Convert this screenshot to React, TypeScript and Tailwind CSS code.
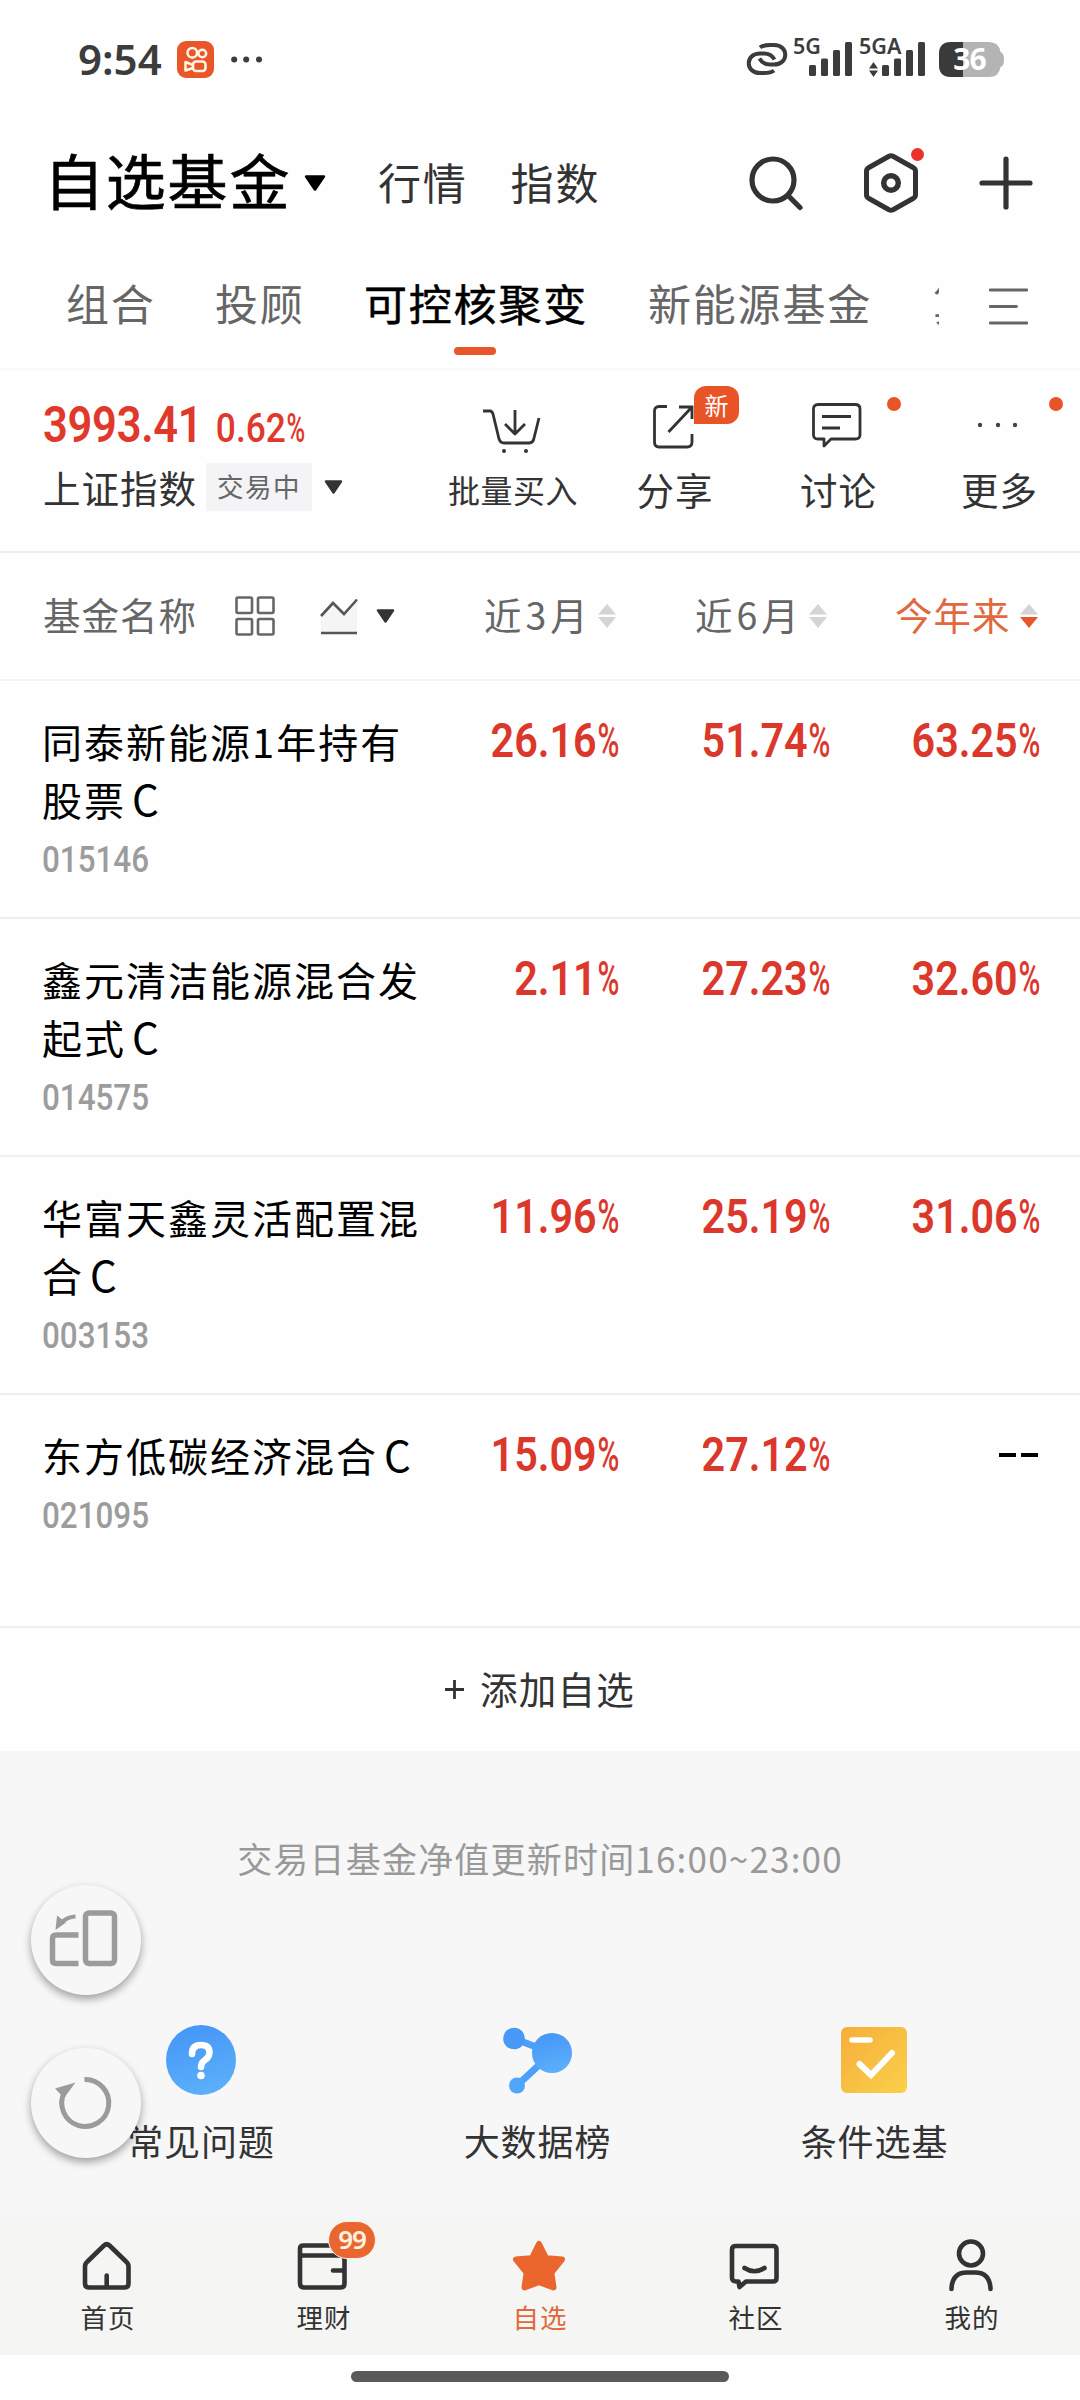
import React from "react";

const Caret = ({ w, h, c }: { w: number; h: number; c: string }) => (
  <svg width={w} height={h} viewBox="0 0 20 15" preserveAspectRatio="none" className="shrink-0">
    <path d="M2 1.5H18L10 13.5Z" fill={c} stroke={c} strokeWidth="2.5" strokeLinejoin="round" />
  </svg>
);

const Sort = ({ down }: { down?: boolean }) => (
  <svg width="18" height="24" viewBox="0 0 18 24" className="shrink-0">
    <path d="M9 0L18 10.5H0Z" fill="#d4d4d4" />
    <path d="M0 13H18L9 24Z" fill={down ? "#e8562a" : "#d4d4d4"} />
  </svg>
);

const Bars = () => (
  <svg width="43" height="34" viewBox="0 0 43 34">
    <g fill="#3c3c3c">
      <rect x="0" y="23" width="7" height="11" rx="1.5" />
      <rect x="12" y="16.5" width="7" height="17.5" rx="1.5" />
      <rect x="24" y="8" width="7" height="26" rx="1.5" />
      <rect x="36" y="0" width="7" height="34" rx="1.5" />
    </g>
  </svg>
);

// Light, condensed percent sign that follows the bold figures.
const Percent = () => (
  <span className="ml-[1px] inline-block w-[0.52em] origin-left scale-x-[0.72] text-left font-medium">%</span>
);

function StatusBar() {
  return (
    <header className="flex h-[120px] items-start pl-[78px] pr-[76px] pt-[38px] text-[#3c3c3c]">
      <span className="-mt-[1px] h-[44px] w-[99px] font-['Noto_Sans'] text-[42px] leading-[44px] font-semibold">9:54</span>
      <svg className="mt-[3px]" width="37" height="37" viewBox="0 0 37 37">
        <rect width="37" height="37" rx="9" fill="#e8562a" />
        <g fill="none" stroke="#fff3e2" strokeWidth="2.6">
          <circle cx="15.3" cy="11.8" r="4.8" />
          <circle cx="25.3" cy="12.5" r="3.8" />
          <rect x="16" y="20.5" width="12.5" height="9.500" rx="3" />
          <path d="M16 24L8.500 21V29.5L16 27" strokeLinejoin="round" />
        </g>
      </svg>
      <svg className="ml-[17px] mt-[18px]" width="32" height="7" viewBox="0 0 32 7">
        <g fill="#3c3c3c">
          <circle cx="3.2" cy="3.5" r="3" />
          <circle cx="15.2" cy="3.5" r="3" />
          <circle cx="28" cy="3.5" r="3" />
        </g>
      </svg>
      <div className="ml-auto flex items-start">
        <svg className="mt-[4px]" width="42" height="34" viewBox="0 0 42 34">
          <g fill="none" stroke="#3c3c3c" strokeWidth="4" strokeLinecap="butt">
            <path d="M14 5.5C17 3 20 3 24 3H28C43 3 43 22.500 28 22.500H24C19 22.500 16 21 13.500 16.500" />
            <path d="M28 28.500C25 31 22 31 18 31H14C-1 31 -1 11.500 14 11.500H18C23 11.500 26 13 28.500 17.500" />
          </g>
        </svg>
        <div className="relative ml-[21px] mt-[4px] h-[34px] w-[43px]">
          <Bars />
          <span className="absolute -top-[8px] -left-[16px] font-['Noto_Sans'] text-[21.500px] leading-[24px] font-semibold">5G</span>
        </div>
        <div className="relative ml-[30px] mt-[4px] h-[34px] w-[43px]">
          <Bars />
          <span className="absolute -top-[8px] -left-[23px] font-['Noto_Sans'] text-[21.500px] leading-[24px] font-semibold">5GA</span>
          <svg className="absolute top-[20px] -left-[13px]" width="9" height="15" viewBox="0 0 9 15">
            <path d="M4.500 0L9 6.500H0ZM0 8.500H9L4.500 15Z" fill="#3c3c3c" />
          </svg>
        </div>
        <div className="relative ml-[14px] mt-[4px] h-[35px] w-[65px]">
          <svg width="65" height="35" viewBox="0 0 65 35">
            <path d="M12 0H50Q60 0 61.500 10Q65 11 65 17.500Q65 24 61.500 25Q60 35 50 35H12Q0 35 0 23V12Q0 0 12 0Z" fill="#b4b4b4" />
            <path d="M12 0H24V35H12Q0 35 0 23V12Q0 0 12 0Z" fill="#3a3a3a" />
          </svg>
          <span className="absolute inset-0 pr-[4px] text-center font-['Noto_Sans'] text-[30px] leading-[34px] font-bold tracking-[-1px] text-white">36</span>
        </div>
      </div>
    </header>
  );
}

function TitleBar() {
  return (
    <div className="flex h-[125px] items-center pr-[47px] pl-[44px] text-[#333]">
      <h1 className="-mt-[7px] w-[252px] text-[60px] leading-none whitespace-nowrap tracking-[1.800px] text-black [-webkit-text-stroke:0.700px_#000]">自选基金</h1>
      <span className="ml-[8px]"><Caret w={22} h={16} c="#000" /></span>
      <span className="-mt-[3px] ml-[52px] text-[43px] leading-none tracking-[1.800px]">行情</span>
      <span className="-mt-[3px] ml-[43px] text-[43px] leading-none tracking-[1.800px]">指数</span>
      <svg className="ml-auto" width="54" height="56" viewBox="0 0 54 56">
        <g fill="none" stroke="#333" strokeWidth="5.200" strokeLinecap="round">
          <circle cx="24" cy="25" r="21" />
          <path d="M40 41.500L51 52.500" />
        </g>
      </svg>
      <div className="relative ml-[61px]">
        <svg width="54" height="60" viewBox="0 0 54 60">
          <g fill="none" stroke="#333" strokeWidth="5" strokeLinejoin="round">
            <path d="M25 3.300Q27 2.300 29 3.300L49.500 14.800Q51.500 16 51.500 18V42Q51.500 44 49.500 45.200L29 56.700Q27 57.700 25 56.700L4.500 45.200Q2.500 44 2.500 42V18Q2.500 16 4.500 14.800Z" />
            <circle cx="27" cy="30" r="7.300" strokeWidth="5.500" />
          </g>
        </svg>
        <span className="absolute -top-[5px] left-[47px] size-[13px] rounded-full bg-[#ea3328]" />
      </div>
      <svg className="ml-[61px]" width="54" height="54" viewBox="0 0 54 54">
        <path d="M27 3V51M3 27H51" stroke="#333" strokeWidth="5.200" strokeLinecap="round" />
      </svg>
    </div>
  );
}

function Tabs() {
  return (
    <nav className="flex h-[125px] items-start border-b-2 border-[#f9f9f9] pl-[66px] text-[43px] leading-[60px] tracking-[1.800px] text-[#666]">
      <span className="mt-[27px] w-[149px] shrink-0">组合</span>
      <span className="mt-[27px] w-[149px] shrink-0">投顾</span>
      <span className="relative mt-[27px] w-[284px] shrink-0 whitespace-nowrap text-black [-webkit-text-stroke:0.500px_#000]">
        可控核聚变
        <i className="absolute top-[75px] left-[90px] h-[8px] w-[42px] rounded-full bg-[#e8562a]" />
      </span>
      <span className="mt-[27px] w-[285px] shrink-0">新能源基金</span>
      <span className="mt-[27px] w-[6px] shrink-0 overflow-hidden whitespace-nowrap">算力</span>
      <svg className="mt-[43px] ml-[50px]" width="39" height="37" viewBox="0 0 39 37">
        <path d="M1 2H38M1 18.500H27.500M1 35H38" stroke="#666" strokeWidth="2.800" strokeLinecap="round" />
      </svg>
    </nav>
  );
}

function Tool({ label, small, width, children }: { label: string; small?: boolean; width: string; children: React.ReactNode }) {
  return (
    <div className={"relative flex shrink-0 flex-col items-center " + width}>
      <div className="flex h-[86px] items-start">{children}</div>
      <span className={small ? "mt-[8px] text-[32px] leading-[50px] tracking-[0.500px]" : "mt-[8px] text-[37.500px] leading-[49px] tracking-[1px]"}>{label}</span>
    </div>
  );
}

function IndexBar() {
  return (
    <section className="flex h-[183px] border-b-2 border-[#efefef] text-[#333]">
      <div className="w-[434px] shrink-0 pl-[43px]">
        <div className="mt-[27px] flex h-[56px] origin-left scale-x-[0.86] items-baseline font-['Roboto'] text-[#e0382b]">
          <span className="w-[201px] shrink-0 text-[50.500px] leading-[56px] font-semibold tracking-[-0.300px]">3993.41</span>
          <span className="text-[41px] font-medium whitespace-nowrap">0.62<Percent /></span>
        </div>
        <div className="mt-[10px] flex h-[48px] items-center">
          <span className="w-[163px] text-[37.500px] leading-[48px] tracking-[1px]">上证指数</span>
          <span className="h-[48px] w-[106px] bg-[#f4f3f5] text-center text-[26.500px] leading-[46px] tracking-[1.500px] text-[#666]">交易中</span>
          <span className="ml-[12px]"><Caret w={19} h={14} c="#333" /></span>
        </div>
      </div>
      <Tool label="批量买入" small width="w-[158px]">
        <svg className="mt-[39px] mr-[2px]" width="58" height="44" viewBox="0 0 58 44">
          <g fill="none" stroke="#333" strokeWidth="2.800" strokeLinejoin="round">
            <path d="M0 2H7Q9 2 10 5L16 30Q17.500 34 21 34H46Q49 34 50.500 31L56 9" />
            <path d="M32 1V25M22 15L32 25L42 15" />
          </g>
          <circle cx="21" cy="42" r="2" fill="#333" />
          <circle cx="43" cy="42" r="2" fill="#333" />
        </svg>
      </Tool>
      <Tool label="分享" width="w-[166px]">
        <svg className="mt-[34px] mr-[3px]" width="42" height="45" viewBox="0 0 42 45">
          <g fill="none" stroke="#333" strokeWidth="2.800">
            <path d="M14 2.500H6Q1.500 2.500 1.500 7V38Q1.500 43 6 43H34Q39 43 39 38V30M26 3H39V15M39 3L15.500 28" />
          </g>
        </svg>
        <span className="absolute top-[16px] left-[102px] h-[38px] w-[45px] rounded-[12px] rounded-bl-none bg-[#e95426] text-center text-[24px] leading-[37px] text-white">新</span>
      </Tool>
      <Tool label="讨论" width="w-[161px]">
        <svg className="mt-[33px] mr-[3px]" width="50" height="45" viewBox="0 0 50 45">
          <path d="M6 1.500H43Q48 1.500 48 6V32Q48 36 43 36H19L12 43V36H6Q1.500 36 1.500 32V6Q1.500 1.500 6 1.500ZM10 13.500H39M10 25H28" fill="none" stroke="#333" strokeWidth="2.800" strokeLinejoin="round" />
        </svg>
        <span className="absolute top-[27px] left-[129px] size-[14px] rounded-full bg-[#e95426]" />
      </Tool>
      <Tool label="更多" width="w-[161px]">
        <svg className="mt-[52px] mr-[3px]" width="42" height="6" viewBox="0 0 42 6">
          <g fill="#444">
            <circle cx="3" cy="3" r="2.200" />
            <circle cx="21" cy="3" r="2.200" />
            <circle cx="38" cy="3" r="2.200" />
          </g>
        </svg>
        <span className="absolute top-[27px] left-[130px] size-[14px] rounded-full bg-[#e95426]" />
      </Tool>
    </section>
  );
}

function TableHead() {
  return (
    <div className="flex h-[128px] items-center border-b-2 border-[#f3f3f3] pl-[43px] text-[37.500px] tracking-[1px] text-[#666]">
      <span className="-mt-[3px] w-[192px]">基金名称</span>
      <svg width="40" height="40" viewBox="0 0 40 40">
        <g fill="none" stroke="#666" strokeWidth="2.600">
          <rect x="1.500" y="1.500" width="15.500" height="15.500" rx="1.500" />
          <rect x="23" y="1.500" width="15.500" height="15.500" rx="1.500" />
          <rect x="1.500" y="23" width="15.500" height="15.500" rx="1.500" />
          <rect x="23" y="23" width="15.500" height="15.500" rx="1.500" />
        </g>
      </svg>
      <svg className="ml-[45px]" width="38" height="37" viewBox="0 0 38 37">
        <path d="M1 18L13 5L24 16L37 2V34H1Z" fill="#f5f5f5" />
        <path d="M1 18L13 5L24 16L37 1.500M1 35H37" fill="none" stroke="#555" strokeWidth="2.600" />
      </svg>
      <span className="ml-[18px]"><Caret w={19} h={14} c="#333" /></span>
      <div className="ml-[89px] flex w-[211px] items-center gap-[9px]"><span className="-mt-[3px]">近<span className="mx-[3px]">3</span>月</span><Sort /></div>
      <div className="flex w-[200px] items-center gap-[9px]"><span className="-mt-[3px]">近<span className="mx-[3px]">6</span>月</span><Sort /></div>
      <div className="flex items-center gap-[9px] text-[#e0693f]"><span className="-mt-[3px]">今年来</span><Sort down /></div>
    </div>
  );
}

const funds = [
  { lines: ["同泰新能源1年持有", "股票"], code: "015146", v: ["26.16", "51.74", "63.25"] },
  { lines: ["鑫元清洁能源混合发", "起式"], code: "014575", v: ["2.11", "27.23", "32.60"] },
  { lines: ["华富天鑫灵活配置混", "合"], code: "003153", v: ["11.96", "25.19", "31.06"] },
  { lines: ["东方低碳经济混合"], code: "021095", v: ["15.09", "27.12", ""] },
];

function FundRow({ f, last }: { f: (typeof funds)[number]; last: boolean }) {
  return (
    <div className={"flex border-b-2 border-[#efefef] pl-[42px] " + (last ? "h-[233px]" : "h-[238px]")}>
      <div className="w-[397px] shrink-0 pt-[31px]">
        {f.lines.map((l, i) => (
          <div key={l} className="text-[40px] leading-[58px] tracking-[2px] whitespace-nowrap text-black">
            {l}
            {i === f.lines.length - 1 && <span className="ml-[6px] text-[42px] leading-none">C</span>}
          </div>
        ))}
        <div className="mt-[12px] origin-left scale-x-[0.86] font-['Roboto'] text-[36.500px] leading-[40px] font-medium text-[#9c9c9c]">{f.code}</div>
      </div>
      {f.v.map((v, i) => (
        <div key={i} className={"pt-[32px] " + (i === 0 ? "w-[180px]" : i === 1 ? "w-[211px]" : "w-[210px]")}>
          {v ? (
            <div className="origin-right scale-x-[0.86] text-right font-['Roboto'] text-[48px] leading-[56px] font-semibold whitespace-nowrap text-[#db382b]">
              {v}<Percent />
            </div>
          ) : (
            <div className="flex h-[56px] items-center justify-end gap-[5px] pr-[2px]">
              <i className="h-[4px] w-[17px] bg-black" />
              <i className="h-[4px] w-[17px] bg-black" />
            </div>
          )}
        </div>
      ))}
    </div>
  );
}

function Shortcuts() {
  return (
    <div className="flex pt-[117px] pl-[33px] text-[36px] leading-[50px] tracking-[0.900px] text-[#333]">
      <div className="flex w-[336px] flex-col items-center">
        <svg width="70" height="70" viewBox="0 0 70 70">
          <defs>
            <linearGradient id="blue" x1="0.300" y1="0" x2="0.600" y2="1">
              <stop offset="0" stopColor="#4596f7" />
              <stop offset="1" stopColor="#5cb0fa" />
            </linearGradient>
          </defs>
          <circle cx="35" cy="35" r="35" fill="url(#blue)" />
          <path d="M26 29Q26 20 35 20Q43.500 20 43.500 27.500Q43.500 32 39 35Q35 37.500 35 42" fill="none" stroke="#fff" strokeWidth="6.500" strokeLinecap="round" />
          <circle cx="35" cy="50.500" r="3.800" fill="#fff" />
        </svg>
        <span className="mt-[20px]">常见问题</span>
      </div>
      <div className="flex w-[337px] flex-col items-center">
        <svg className="mr-[2px]" width="70" height="70" viewBox="0 0 70 70">
          <path d="M12 13.500L50 28L15 60.500" fill="none" stroke="#4e9ff8" strokeWidth="7" />
          <circle cx="12" cy="13.500" r="10.800" fill="#4898f7" />
          <circle cx="50" cy="28" r="20" fill="url(#blue)" />
          <circle cx="15" cy="60.500" r="8" fill="#52a6f9" />
        </svg>
        <span className="mt-[20px]">大数据榜</span>
      </div>
      <div className="flex w-[337px] flex-col items-center">
        <svg className="mr-[2px]" width="70" height="70" viewBox="0 0 70 70">
          <defs>
            <linearGradient id="gold" x1="0" y1="0" x2="1" y2="1">
              <stop offset="0" stopColor="#f6ae3b" />
              <stop offset="1" stopColor="#fad04a" />
            </linearGradient>
          </defs>
          <rect x="2" y="2" width="66" height="66" rx="6" fill="url(#gold)" />
          <path d="M13 15H31" stroke="#fff" strokeWidth="5.500" strokeLinecap="round" />
          <path d="M20.500 39L32 50L53 28" fill="none" stroke="#fff" strokeWidth="6" strokeLinecap="round" />
        </svg>
        <span className="mt-[20px]">条件选基</span>
      </div>
    </div>
  );
}

function FloatButtons() {
  const btn = "flex size-[110px] items-center justify-center rounded-full bg-[#f7f7f7] shadow-[0_4px_9px_rgba(0,0,0,0.36)]";
  return (
    <div className="absolute top-[1885px] left-[31px] flex flex-col gap-[53px]">
      <div className={btn}>
        <svg width="110" height="110" viewBox="0 0 110 110" fill="none" stroke="#9b9b9b" strokeWidth="5.500">
          <rect x="54.500" y="28" width="29" height="50.500" rx="3.500" />
          <path d="M47.500 50H25Q21.500 50 21.500 53.500V75Q21.500 78.500 25 78.500H47.500" />
          <path d="M44.500 31.500Q35 32 29 39" strokeWidth="4" />
          <path d="M26 30.500L24.500 45L35 37.500Z" fill="#9b9b9b" stroke="none" />
        </svg>
      </div>
      <div className={btn}>
        <svg width="110" height="110" viewBox="0 0 110 110" fill="none" stroke="#9b9b9b" strokeWidth="5">
          <path d="M53.500 31.500A23.500 23.500 0 1 1 33.500 44" />
          <path d="M24 40.500L44.500 34.500L33 50Z" fill="#9b9b9b" stroke="none" />
        </svg>
      </div>
    </div>
  );
}

function NavItem({ label, active, children }: { label: string; active?: boolean; children: React.ReactNode }) {
  return (
    <div className={"relative flex flex-1 flex-col items-center pt-[20px] text-[26.500px] leading-[36px] tracking-[1px] " + (active ? "text-[#df6a3c]" : "text-[#333]")}>
      <svg className="mr-[2px]" width="56" height="56" viewBox="0 0 56 56" fill="none" stroke="#333" strokeWidth="4.600" strokeLinecap="round" strokeLinejoin="round">{children}</svg>
      <span className="mt-[6px]">{label}</span>
    </div>
  );
}

function BottomNav() {
  return (
    <nav className="flex h-[138px] bg-[#f5f5f4]">
      <NavItem label="首页">
        <path d="M8.500 24.500Q6 26.500 6 29.500V46.500Q6 50.500 10 50.500H45.500Q49.500 50.500 49.500 46.500V29.500Q49.500 26.500 47 24.500L30.500 8.500Q27.700 6 25 8.500ZM27.700 50V38.500" />
      </NavItem>
      <div className="relative flex flex-1">
        <NavItem label="理财">
          <path d="M5 11.500Q5 8.500 8.500 8.500H45Q48.500 8.500 48.500 12V19M5 11.500V46Q5 50.500 9 50.500H45.500Q49.500 50.500 49.500 46.500V23Q49.500 18.500 45.500 18.500H5M49 33.500H38" />
        </NavItem>
        <span className="absolute top-[4px] left-[112px] h-[38px] w-[48px] rounded-full border-[1.500px] border-[#fbf5ee] bg-[#e96630] text-center font-['Noto_Sans'] text-[26px] leading-[34px] font-semibold tracking-[-1px] text-[#fff3e0]">99</span>
      </div>
      <NavItem label="自选" active>
        <path d="M28 7L34.500 20Q35 21 36 21.200L51 22.500L41 35Q40.300 35.800 40.500 36.800L42.500 50.500L29 45.500Q28 45 27 45.500L13.500 50.500L15.500 36.800Q15.700 35.800 15 35L5 22.500L20 21.200Q21 21 21.500 20Z" fill="#ea662d" stroke="#ea662d" strokeWidth="6" />
      </NavItem>
      <NavItem label="社区">
        <path d="M9 9H46Q49.500 9 49.500 12.500V41Q49.500 44.500 46 44.500H19L12.500 50L11.500 44.500H9Q5 44.500 5 41V12.500Q5 9 9 9ZM17.500 31Q27.500 37.500 37.500 31" />
      </NavItem>
      <NavItem label="我的">
        <circle cx="28" cy="16.500" r="12" />
        <path d="M8.500 52Q9 35.500 24 35.500H32Q47 35.500 47.500 52" />
      </NavItem>
    </nav>
  );
}

export default function App() {
  return (
    <div className="relative h-[2400px] w-[1080px] overflow-hidden bg-[#fefefe] font-['Noto_Sans_CJK_SC',sans-serif]">
      <StatusBar />
      <TitleBar />
      <Tabs />
      <IndexBar />
      <TableHead />
      {funds.map((f, i) => (
        <FundRow key={f.code} f={f} last={i === 3} />
      ))}
      <div className="flex h-[123px] items-center justify-center text-[37.500px] leading-[50px] tracking-[1.200px] text-[#333]">
        <svg className="mr-[16px]" width="19" height="19" viewBox="0 0 19 19">
          <path d="M9.500 0V19M0 9.500H19" stroke="#333" strokeWidth="2.800" />
        </svg>
        <span className="-mt-[4px]">添加自选</span>
      </div>
      <section className="h-[466px] bg-[#f7f7f7] pt-[82px]">
        <p className="h-[50px] text-center text-[35px] leading-[50px] tracking-[1.200px] text-[#999]">交易日基金净值更新时间16:00~23:00</p>
        <div className="pt-[25px]"><Shortcuts /></div>
      </section>
      <BottomNav />
      <div className="flex h-[45px] justify-center bg-[#fefefe] pt-[16px]">
        <div className="h-[11px] w-[378px] rounded-full bg-[#5a5a5a]" />
      </div>
      <FloatButtons />
    </div>
  );
}
